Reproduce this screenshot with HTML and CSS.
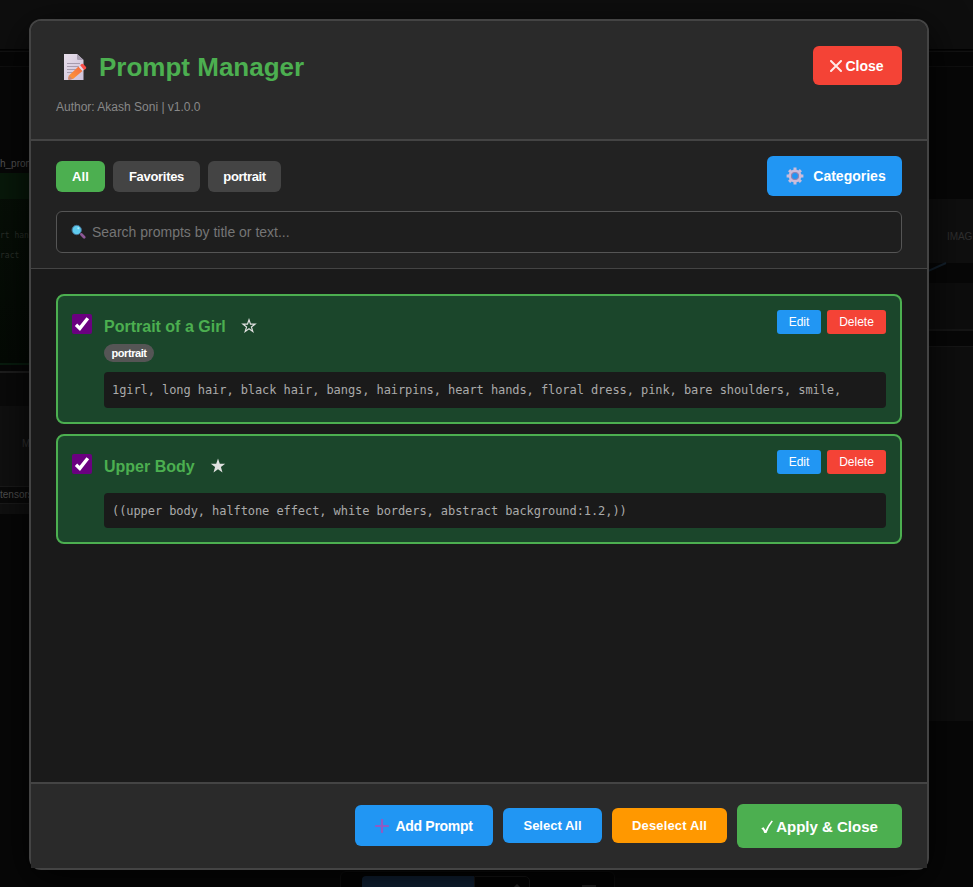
FILE: index.html
```html
<!DOCTYPE html>
<html lang="en">
<head>
<meta charset="utf-8">
<title>Prompt Manager</title>
<link rel="stylesheet" href="styles.css">
</head>
<body>
<div class="canvas">
  <div class="topbar"></div>
  <div class="tabline"></div>
  <div class="node node-left"><span class="node-name">h_prompt</span><div class="node-title"></div><span class="node-text">rt hands</span><span class="node-text node-text-2">ract</span></div>
  <div class="node node-left-2"><span class="m-label">M</span><span class="t-label">tensors</span></div>
  <div class="node node-right"><span>IMAG</span></div>
  <svg class="link" width="24" height="12" viewBox="0 0 24 12"><path d="M0 9 L18 1" stroke="#14212d" stroke-width="2"/></svg>
  <div class="node node-right-2"></div>
  <div class="node node-right-3"></div>
  <div class="runbar"><div class="run"></div><div class="stepper"><svg width="10" height="6" viewBox="0 0 10 6"><path d="M1 5 L5 1 L9 5" fill="none" stroke="#2b2b2b" stroke-width="1.5"/></svg></div><div class="dash"></div></div>
</div>
<main class="modal">
  <header class="header">
    <div>
      <h1 class="title">
        <svg class="memo" width="24" height="28" viewBox="0 0 24 28">
          <defs><linearGradient id="paper" x1="0" y1="0" x2="1" y2="1"><stop offset="0" stop-color="#e8dfeb"/><stop offset="1" stop-color="#ccc0d8"/></linearGradient><linearGradient id="pen" x1="0" y1="1" x2="1" y2="0"><stop offset="0" stop-color="#ff9c35"/><stop offset="1" stop-color="#f36a43"/></linearGradient></defs>
          <path d="M1 1H14L20.500 7V27H1Z" fill="url(#paper)"/>
          <path d="M14 1V5.800Q14 7 15.200 7H20.500Z" fill="#aaa0b3"/>
          <path d="M4 10.500H17M4 13.500H17M4 16.500H14M4 19.500H11" stroke="#a79caf" stroke-width="1"/>
          <path d="M6 22.500L15.500 13.500L19.500 18L10 26L6.500 26.500Q5 26.600 5.200 25.500Z" fill="url(#pen)"/>
          <path d="M6 22.500L9.700 25.700L6.500 27Q4.800 27 5.200 25.500Z" fill="#c98779"/>
          <path d="M15.500 13.500L17.500 12L21.200 16.400L19.500 18Z" fill="#e5d6e5"/>
          <path d="M17.200 12.200L18.500 11.100Q19.500 10.400 20.700 11.600L23 14Q23.800 15.200 22.600 15.900L21 17Z" fill="#fb4e48"/>
        </svg>
        <span>Prompt Manager</span>
      </h1>
      <p class="author">Author: Akash Soni | v1.0.0</p>
    </div>
    <button class="btn btn-close"><svg width="12" height="12" viewBox="0 0 12 12"><path d="M1 1L11 11M11 1L1 11" stroke="#ffe9e7" stroke-width="2" stroke-linecap="round"/></svg><span>Close</span></button>
  </header>
  <section class="toolbar">
    <div class="filters">
      <div class="tabs"><button class="tab tab-all active">All</button><button class="tab tab-fav">Favorites</button><button class="tab tab-portrait">portrait</button></div>
      <button class="btn btn-categories">
        <svg width="18" height="18" viewBox="0 0 18 18"><g stroke="#cbbcda" stroke-width="3"><path d="M9 .600V17.400M.600 9H17.400M3.100 3.100L14.900 14.900M14.900 3.100L3.100 14.900"/></g><circle cx="9" cy="9" r="4.700" fill="#2196f3" stroke="#cbbcda" stroke-width="3.600"/><circle cx="9" cy="9" r="3.500" fill="#2196f3" stroke="#9283b2" stroke-width="1.200"/></svg>
        <span>Categories</span>
      </button>
    </div>
    <div class="search">
      <svg width="16" height="16" viewBox="0 0 16 16"><path d="M9.500 9.500L11.500 11.500" stroke="#6a5380" stroke-width="1.500"/><path d="M10.500 10.500L13.200 13.200" stroke="#8d5795" stroke-width="2.800" stroke-linecap="round"/><circle cx="5.700" cy="6" r="4.700" fill="#5fcbee" stroke="#446f91" stroke-width="1"/><circle cx="7.300" cy="4.200" r="1" fill="#b0ecfb"/></svg>
      <span>Search prompts by title or text...</span>
    </div>
  </section>
  <section class="list">
    <article class="card">
      <span class="check"><svg width="20" height="20" viewBox="0 0 20 20"><path d="M4 10.800L7.800 14.400L15.800 4.200" fill="none" stroke="#fff" stroke-width="3.400"/></svg></span>
      <div class="card-body">
        <div class="card-head"><h2>Portrait of a Girl</h2><svg class="star" width="16" height="16" viewBox="0 0 16 16"><path d="M8 1.800L9.500 6.200H14L10.400 8.900L11.800 13.400L8 10.700L4.200 13.400L5.600 8.900L2 6.200H6.500Z" fill="none" stroke="#e0e0e0" stroke-width="1.200"/></svg>
          <div class="actions"><button class="mini edit">Edit</button><button class="mini delete">Delete</button></div></div>
        <span class="tag">portrait</span>
        <p class="prompt">1girl, long hair, black hair, bangs, hairpins, heart hands, floral dress, pink, bare shoulders, smile,</p>
      </div>
    </article>
    <article class="card card-short">
      <span class="check"><svg width="20" height="20" viewBox="0 0 20 20"><path d="M4 10.800L7.800 14.400L15.800 4.200" fill="none" stroke="#fff" stroke-width="3.400"/></svg></span>
      <div class="card-body">
        <div class="card-head"><h2>Upper Body</h2><svg class="star" width="16" height="16" viewBox="0 0 16 16"><path d="M8 .500L9.800 5.700H15.200L10.900 9L12.500 14.400L8 11.200L3.500 14.400L5.100 9L.800 5.700H6.200Z" fill="#e0e0e0"/></svg>
          <div class="actions"><button class="mini edit">Edit</button><button class="mini delete">Delete</button></div></div>
        <p class="prompt">((upper body, halftone effect, white borders, abstract background:1.2,))</p>
      </div>
    </article>
  </section>
  <footer class="footer">
    <button class="btn btn-add"><svg width="14" height="14" viewBox="0 0 14 14"><path d="M7 1V13M1 7H13" stroke="#8f5cc4" stroke-width="2.200" stroke-linecap="round"/></svg><span>Add Prompt</span></button>
    <button class="btn btn-select">Select All</button>
    <button class="btn btn-deselect">Deselect All</button>
    <button class="btn btn-apply"><svg width="12" height="14" viewBox="0 0 12 14"><path d="M.300 8.200L2.600 7.300L4.500 10.200Q7 5 10.600 .600L11.900 1.300Q7.700 6.500 5.500 13H3.300Q2.500 10 .300 8.200Z" fill="#fff"/></svg><span>Apply &amp; Close</span></button>
  </footer>
</main>
</body>
</html>
```
FILE: styles.css
```css
* { box-sizing: border-box; }
body { margin: 0; width: 973px; height: 887px; overflow: hidden; background: #060606; font-family: "Liberation Sans", Arial, sans-serif; color: #e0e0e0; }
h1, h2, p { margin: 0; }
button { border: 0; padding: 0; font-family: inherit; color: #fff; white-space: nowrap; }
svg { display: block; flex: none; }

/* Dimmed node canvas behind the dialog */
.canvas { position: absolute; inset: 0; overflow: hidden; background: #070707; }
.canvas > * { position: absolute; }
.topbar { left: 0; top: 0; width: 100%; height: 50px; background: #0e0e0e; border-bottom: 1px solid #020202; }
.tabline { left: 0; top: 51px; width: 100%; height: 16px; background: #060606; border-top: 1px solid #121212; border-bottom: 1px solid #0f0f0f; }
.node { overflow: hidden; }
.node > * { position: absolute; }
.node-left { left: 0; top: 156px; width: 60px; height: 209px; background: linear-gradient(#071007, #040904); border-bottom: 2px solid #081c0e; }
.node-name { left: 0; top: 0; width: 60px; height: 17px; background: #070707; font-size: 10px; line-height: 16px; color: #555; }
.node-title { left: 0; top: 17px; width: 60px; height: 26px; background: #08190a; }
.node-text { left: 0; top: 74px; font: 8px/12px "DejaVu Sans Mono", monospace; color: #2a302a; }
.node-text-2 { top: 94px; }
.node-left-2 { left: 0; top: 371px; width: 60px; height: 143px; background: linear-gradient(#0a0a0a 33px, #101010 33px); border-top: 2px solid #1e1e1e; }
.m-label { left: 22px; top: 65px; font-size: 10px; color: #333; }
.t-label { left: 0; top: 113px; width: 60px; height: 18px; background: #090909; border: solid #1a1a1a; border-width: 1px 0; font-size: 10px; line-height: 16px; color: #505050; }
.node-right { left: 925px; top: 199px; width: 48px; height: 64px; background: #0f0f0f; }
.node-right span { left: 22px; top: 32px; font-size: 10px; letter-spacing: -.1px; color: #303030; }
.link { left: 928px; top: 262px; }
.node-right-2 { left: 925px; top: 283px; width: 60px; height: 48px; background: #0d0d0d; border-bottom: 2px solid #151515; }
.node-right-3 { left: 925px; top: 346px; width: 60px; height: 375px; background: #0e0e0e; border-top: 1px solid #161616; }
.runbar { left: 340px; top: 871px; width: 275px; height: 30px; padding: 4px 21px; display: flex; background: #040404; border: 1px solid #101010; border-radius: 6px; }
.run { width: 112px; flex: none; height: 20px; background: #12243a; border-radius: 4px 0 0 0; }
.stepper { width: 56px; flex: none; height: 20px; padding: 7px 0 0 37px; border: 1px solid #181818; border-radius: 0 5px 0 0; }
.dash { width: 14px; flex: none; height: 2px; margin: 9px 0 0 52px; background: #222; }

.modal { position: relative; width: 900px; height: 851px; margin: 19px 0 0 29px; display: flex; flex-direction: column; background: #1a1a1a; border: 2px solid #444; border-radius: 12px; box-shadow: 0 10px 40px rgba(0,0,0,.8); }
.header { height: 120px; padding: 25px; display: flex; justify-content: space-between; align-items: flex-start; background: #2a2a2a; border-bottom: 2px solid #444; border-radius: 10px 10px 0 0; }
.title { height: 42px; padding-left: 7px; display: flex; align-items: center; font-size: 26px; line-height: 42px; color: #4caf50; }
.memo { margin-right: 12px; }
.author { margin-top: 11px; font-size: 12px; line-height: 16px; color: #888; }
.btn { display: flex; align-items: center; justify-content: center; border-radius: 6px; background: #2196f3; font-size: 14px; font-weight: bold; }
.btn-close { width: 89px; height: 39px; gap: 3px; padding-right: 1px; background: #f44336; }

.toolbar { height: 128px; padding: 15px 25px; background: #222; border-bottom: 1px solid #444; }
.filters { display: flex; justify-content: space-between; align-items: center; height: 40px; }
.tabs { display: flex; gap: 8px; }
.tab { height: 31px; border-radius: 6px; background: #444; font-size: 13px; font-weight: bold; }
.tab-all { width: 49px; letter-spacing: .2px; }
.tab-fav { width: 87px; letter-spacing: -.3px; }
.tab-portrait { width: 73px; letter-spacing: -.4px; }
.tab.active { background: #4caf50; }
.btn-categories { width: 135px; height: 40px; gap: 9px; padding-left: 3px; }
.search { height: 42px; margin-top: 15px; padding: 0 14px; display: flex; align-items: center; gap: 5px; border: 1px solid #555; border-radius: 6px; background: #1e1e1e; font-size: 14px; color: #757575; }

.list { flex: 1; padding: 25px; display: flex; flex-direction: column; gap: 10px; }
.card { height: 130px; padding: 14px; display: flex; gap: 12px; background: #1b462b; border: 2px solid #4caf50; border-radius: 8px; }
.card-short { height: 110px; }
.check { width: 20px; height: 20px; margin-top: 4px; border-radius: 2px; background: #6a0080; }
.card-body { flex: 1; }
.card-head { display: flex; align-items: flex-start; height: 34px; }
h2 { font-size: 16px; line-height: 34px; color: #4caf50; }
.star { margin: 8px 0 0 15px; }
.actions { display: flex; gap: 6px; margin-left: auto; }
.mini { height: 24px; border-radius: 3px; font-size: 12px; }
.edit { width: 44px; background: #2196f3; }
.delete { width: 59px; background: #f44336; }
.tag { display: block; width: 50px; height: 18px; border-radius: 9px; background: #555; color: #fff; font-size: 11px; font-weight: bold; letter-spacing: -.45px; line-height: 18px; text-align: center; }
.prompt { height: 36px; margin-top: 10px; padding: 0 8px; border-radius: 4px; background: #1a1a1a; color: #aaa; font: 12px/37px "DejaVu Sans Mono", monospace; letter-spacing: -.076px; white-space: nowrap; }
.card-short .prompt { height: 35px; margin-top: 9px; }

.footer { flex: none; height: 86px; padding: 0 25px; display: flex; align-items: center; justify-content: flex-end; gap: 10px; background: #2a2a2a; border-top: 2px solid #444; }
.btn-add { width: 138px; height: 41px; gap: 6px; padding-top: 1px; letter-spacing: -.3px; }
.btn-select, .btn-deselect { height: 35px; margin-bottom: 1px; font-size: 13px; }
.btn-add { margin-bottom: 1px; }
.btn-select { width: 99px; }
.btn-deselect { width: 115px; background: #ff9800; letter-spacing: .15px; }
.btn-apply { width: 165px; height: 44px; gap: 3px; padding-top: 1px; background: #4caf50; font-size: 15px; }
```
